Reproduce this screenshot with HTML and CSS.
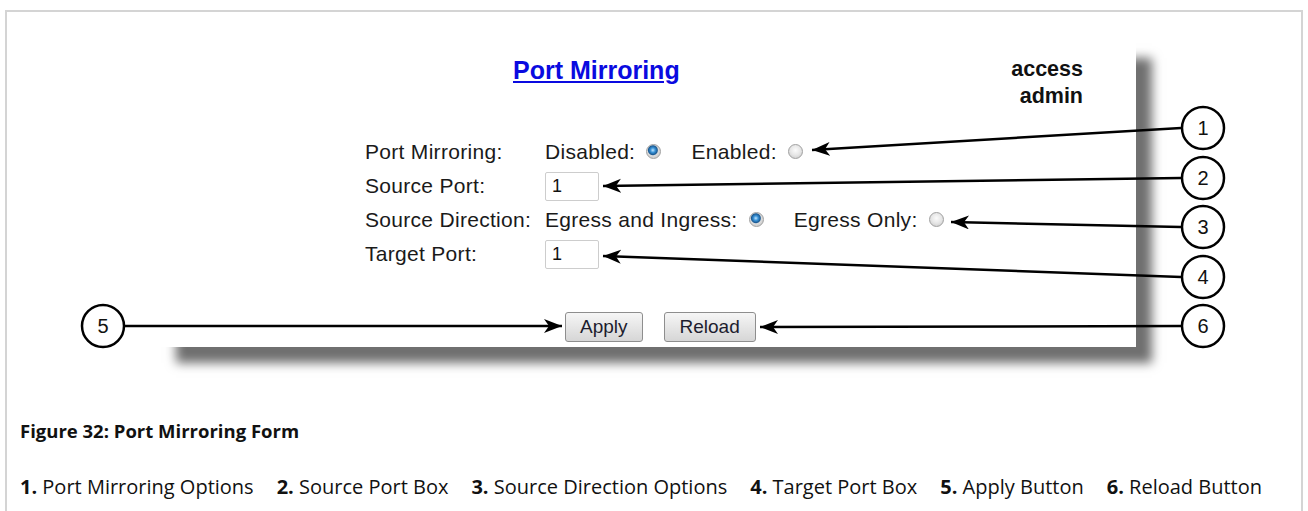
FILE: index.html
```html
<!DOCTYPE html>
<html lang="en">
<head>
  <title>Port Mirroring Form</title>
  <link rel="stylesheet" href="styles.css">
</head>
<body>
  <div class="frame">
    <div class="shot">
      <div class="panel">
        <div class="head">
          <a class="title" href="#">Port Mirroring</a>
          <div class="user">access<br>admin</div>
        </div>
        <form class="grid">
          <span>Port Mirroring:</span>
          <span>
            <label class="opt">Disabled: <input type="radio" name="mirror" checked></label>
            <label class="opt">Enabled: <input type="radio" name="mirror"></label>
          </span>
          <span>Source Port:</span>
          <span><input class="box" type="text" value="1"></span>
          <span>Source Direction:</span>
          <span>
            <label class="opt">Egress and Ingress: <input type="radio" name="dir" checked></label>
            <label class="opt">Egress Only: <input type="radio" name="dir"></label>
          </span>
          <span>Target Port:</span>
          <span><input class="box" type="text" value="1"></span>
        </form>
        <div class="buttons">
          <button type="button">Apply</button>
          <button type="button">Reload</button>
        </div>
      </div>
    </div>
    <div class="caption">
      <h3>Figure 32: Port Mirroring Form</h3>
      <p>
        <span><b>1.</b> Port Mirroring Options</span>
        <span><b>2.</b> Source Port Box</span>
        <span><b>3.</b> Source Direction Options</span>
        <span><b>4.</b> Target Port Box</span>
        <span><b>5.</b> Apply Button</span>
        <span><b>6.</b> Reload Button</span>
      </p>
    </div>
  </div>

  <!-- callouts -->
  <svg class="callouts" width="1308" height="400" viewBox="0 0 1308 400">
    <defs>
      <marker id="tip" markerUnits="userSpaceOnUse" markerWidth="24" markerHeight="16" refX="18" refY="7" orient="auto">
        <path d="M18,7 L0,0 L5,7 L0,14 Z" fill="#000"/>
      </marker>
    </defs>
    <g stroke="#000" stroke-width="2.5" fill="none">
      <line x1="1181" y1="128" x2="812" y2="150" marker-end="url(#tip)"/>
      <line x1="1181" y1="178" x2="603" y2="186" marker-end="url(#tip)"/>
      <line x1="1181" y1="227" x2="951" y2="222" marker-end="url(#tip)"/>
      <line x1="1181" y1="277" x2="603" y2="256" marker-end="url(#tip)"/>
      <line x1="1181" y1="326" x2="760" y2="327" marker-end="url(#tip)"/>
      <line x1="125" y1="326" x2="562" y2="326" marker-end="url(#tip)"/>
    </g>
    <g stroke="#000" stroke-width="2.5" fill="#fff">
      <circle cx="1203" cy="128" r="21"/>
      <circle cx="1203" cy="178" r="21"/>
      <circle cx="1203" cy="227" r="21"/>
      <circle cx="1203" cy="277" r="21"/>
      <circle cx="1203" cy="326" r="21"/>
      <circle cx="103" cy="326" r="21"/>
    </g>
    <g class="num" text-anchor="middle">
      <text x="1203" y="135">1</text>
      <text x="1203" y="185">2</text>
      <text x="1203" y="234">3</text>
      <text x="1203" y="284">4</text>
      <text x="1203" y="333">6</text>
      <text x="103" y="333">5</text>
    </g>
  </svg>
</body>
</html>
```

FILE: styles.css
```css
body {
  margin: 0;
  position: relative;
  background: #fff;
  font-family: "Liberation Sans", Arial, sans-serif;
}

.frame {
  margin: 10px 5px 0 5px;
  height: 560px;
  border: 2px solid #d4d4d4;
  border-bottom: none;
}

.shot {
  height: 395px;
  padding-top: 30px;
  box-sizing: border-box;
}

.panel {
  margin-left: 153px;
  width: 976px;
  height: 305px;
  background: #fff;
  box-shadow: 16px 16px 10px #707070;
  color: #1a1a1a;
}

.head {
  display: flex;
  justify-content: space-between;
  align-items: flex-start;
  padding: 14px 53px 0 353px;
  height: 55px;
}

.title {
  font-size: 25px;
  font-weight: bold;
  line-height: 28px;
  color: #0a0ae0;
  text-decoration: underline;
}

.user {
  font-size: 21.5px;
  font-weight: bold;
  line-height: 27px;
  text-align: right;
  color: #111;
}

.grid {
  display: grid;
  grid-template-columns: 180px auto;
  grid-auto-rows: 34px;
  align-items: center;
  margin: 24px 0 0 205px;
  font-size: 21px;
  letter-spacing: 0.3px;
}

.opt {
  margin-right: 24px;
}

.opt input {
  -webkit-appearance: none;
  appearance: none;
  width: 15px;
  height: 15px;
  margin: 0 0 0 5px;
  border: 1px solid #a0a0a0;
  border-radius: 50%;
  background: radial-gradient(circle at 50% 40%, #fbfbfb 0, #e6e6e6 50%, #c4c4c4 100%);
  vertical-align: 0;
}

.opt input:checked {
  background: radial-gradient(circle at 45% 40%, #c4e6ff 0, #3a94d8 22%, #1b5a93 42%, #dcdcdc 52%, #c0c0c0 100%);
}

.box {
  width: 54px;
  height: 29px;
  box-sizing: border-box;
  padding: 0 6px;
  border: 1px solid #cdcdcd;
  border-radius: 2px;
  font-family: "Liberation Sans", Arial, sans-serif;
  font-size: 18px;
  color: #111;
}

.buttons {
  display: flex;
  gap: 21px;
  margin: 41px 0 0 405px;
}

.buttons button {
  height: 30px;
  padding: 0 14px;
  border: 1px solid #8e8e8e;
  border-radius: 3px;
  background: linear-gradient(#f6f6f6, #e6e6e6 50%, #d6d6d6);
  font-family: "Liberation Sans", Arial, sans-serif;
  font-size: 19px;
  color: #1d1d2e;
}

.buttons button + button {
  padding: 0 15px;
}

.caption {
  padding-left: 13px;
  font-family: "Open Sans", "Noto Sans", sans-serif;
  color: #111;
}

.caption h3 {
  margin: 11px 0 0;
  font-size: 18.5px;
  line-height: 26px;
}

.caption p {
  display: flex;
  gap: 23px;
  margin: 30px 0 0;
  font-size: 20px;
  line-height: 26px;
}

.callouts {
  position: absolute;
  top: 0;
  left: 0;
}

.num text {
  font-family: "Liberation Sans", Arial, sans-serif;
  font-size: 20px;
  fill: #111;
}
```
